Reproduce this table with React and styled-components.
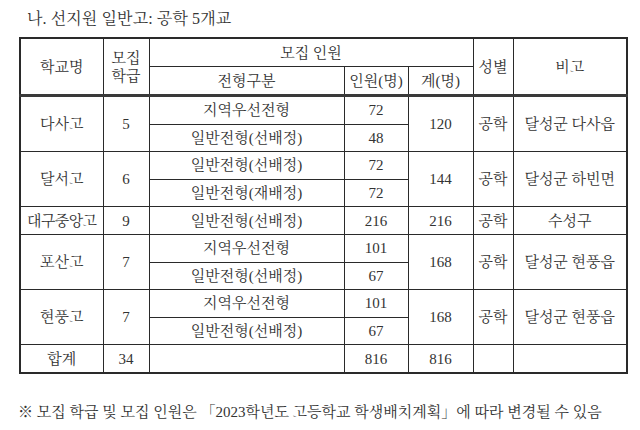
import React from 'react'
import styled, { createGlobalStyle } from 'styled-components'

const GlobalStyle = createGlobalStyle`
  html, body {
    margin: 0;
    padding: 0;
    background: #ffffff;
  }
  body {
    font-family: "Liberation Serif", "Noto Serif CJK KR", "Noto Sans CJK KR", serif;
    color: #333333;
  }
`

const Page = styled.div`
  width: 640px;
  height: 430px;
  box-sizing: border-box;
  padding: 10px 0 0 19px;
  display: flex;
  flex-direction: column;
`

const Title = styled.h1`
  margin: 0 0 9px 8px;
  font-size: 16px;
  font-weight: 400;
  line-height: 18px;
  letter-spacing: 0.1px;
`

const Table = styled.table`
  width: 607px;
  border-collapse: collapse;
  table-layout: fixed;
  border: 2px solid #2a2a2a;
`

const Cell = styled.td`
  border: 1px solid #2a2a2a;
  height: ${p => p.$h || 26.6}px;
  padding: 0;
  text-align: center;
  vertical-align: middle;
  font-size: 15px;
  line-height: 18px;
  font-weight: 400;
  white-space: nowrap;
  letter-spacing: ${p => p.$tight ? '-0.6px' : '0'};
`

const HeadCell = styled(Cell).attrs({ as: 'th' })`
  border-bottom: ${p => p.$last ? '3px solid #3a3a3a' : '1px solid #2a2a2a'};
`

const Note = styled.p`
  margin: 29px 0 0 -1px;
  font-size: 15px;
  line-height: 18px;
  letter-spacing: 0;
`

const schools = [
  { name: '다사고', classes: 5, total: 120, area: '달성군 다사읍', rows: [['지역우선전형', 72], ['일반전형(선배정)', 48]] },
  { name: '달서고', classes: 6, total: 144, area: '달성군 하빈면', rows: [['일반전형(선배정)', 72], ['일반전형(재배정)', 72]] },
  { name: '대구중앙고', classes: 9, total: 216, area: '수성구', rows: [['일반전형(선배정)', 216]] },
  { name: '포산고', classes: 7, total: 168, area: '달성군 현풍읍', rows: [['지역우선전형', 101], ['일반전형(선배정)', 67]] },
  { name: '현풍고', classes: 7, total: 168, area: '달성군 현풍읍', rows: [['지역우선전형', 101], ['일반전형(선배정)', 67]] },
]

const widths = [83, 46, 195, 64, 65, 40, 114]

const App = () => {
  return (
    <Page>
      <GlobalStyle />
      <Title>나. 선지원 일반고: 공학 5개교</Title>

      <Table>
        <colgroup>
          {widths.map((w, i) => <col key={i} style={{ width: w }} />)}
        </colgroup>
        <thead>
          <tr>
            <HeadCell rowSpan={2} $last>학교명</HeadCell>
            <HeadCell rowSpan={2} $last>모집<br />학급</HeadCell>
            <HeadCell colSpan={3} $h={27}>모집 인원</HeadCell>
            <HeadCell rowSpan={2} $last>성별</HeadCell>
            <HeadCell rowSpan={2} $last>비고</HeadCell>
          </tr>
          <tr>
            <HeadCell $last $h={27}>전형구분</HeadCell>
            <HeadCell $last>인원(명)</HeadCell>
            <HeadCell $last>계(명)</HeadCell>
          </tr>
        </thead>
        <tbody>
          {schools.map(s => s.rows.map((r, i) => (
            <tr key={s.name + i}>
              {i === 0 && (
                <Cell rowSpan={s.rows.length} $tight={s.name.length > 4}>{s.name}</Cell>
              )}
              {i === 0 && <Cell rowSpan={s.rows.length}>{s.classes}</Cell>}
              <Cell>{r[0]}</Cell>
              <Cell>{r[1]}</Cell>
              {i === 0 && <Cell rowSpan={s.rows.length}>{s.total}</Cell>}
              {i === 0 && <Cell rowSpan={s.rows.length}>공학</Cell>}
              {i === 0 && <Cell rowSpan={s.rows.length}>{s.area}</Cell>}
            </tr>
          )))}
          <tr>
            <Cell>합계</Cell>
            <Cell>34</Cell>
            <Cell />
            <Cell>816</Cell>
            <Cell>816</Cell>
            <Cell />
            <Cell />
          </tr>
        </tbody>
      </Table>

      <Note>※ 모집 학급 및 모집 인원은 「2023학년도 고등학교 학생배치계획」에 따라 변경될 수 있음</Note>
    </Page>
  )
}

export default App
